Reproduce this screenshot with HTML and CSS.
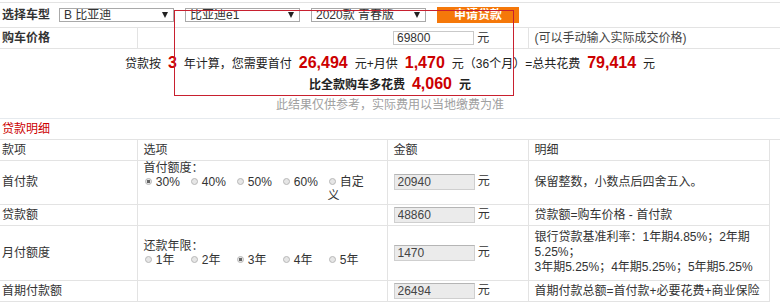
FILE: index.html
```html
<!DOCTYPE html>
<html lang="zh-CN">
<head>
    <meta charset="UTF-8">
    <title>贷款购车计算器</title>
    <meta name="viewport" content="width=device-width, initial-scale=1.0">
    <link rel="stylesheet" href="styles.css">
</head>
<body>

    <div class="calc">
        <table class="car-table">
            <colgroup>
                <col class="col-item">
                <col class="col-option">
                <col class="col-amount">
                <col class="col-wide">
            </colgroup>
            <tr class="row-select">
                <td colspan="4">
                    <div class="select-line">
                        <span class="row-label">选择车型</span>
                        <span class="select-box"><select><option>B 比亚迪</option></select></span>
                        <span class="select-box"><select><option>比亚迪e1</option></select></span>
                        <span class="select-box"><select><option>2020款 青春版</option></select></span>
                        <button class="apply-btn">申请贷款</button>
                    </div>
                </td>
            </tr>
            <tr class="row-price">
                <td class="row-label">购车价格</td>
                <td class="no-line"></td>
                <td><input class="price-input" type="text" value="69800"> 元</td>
                <td class="hint">(可以手动输入实际成交价格)</td>
            </tr>
            <tr class="row-result">
                <td colspan="4">
                    <p class="result-line">贷款按<span class="num">3</span>年计算，您需要首付<span class="num">26,494</span>元+月供<span class="num">1,470</span>元（36个月）=总共花费<span class="num">79,414</span>元</p>
                    <p class="result-line result-extra">比全款购车多花费<span class="num">4,060</span>元</p>
                    <p class="result-line result-note">此结果仅供参考，实际费用以当地缴费为准</p>
                </td>
            </tr>
        </table>

        <div class="section-title">贷款明细</div>

        <table class="loan-table">
            <colgroup>
                <col class="col-item">
                <col class="col-option">
                <col class="col-amount">
                <col class="col-detail">
            </colgroup>
            <tr class="row-head">
                <td>款项</td>
                <td>选项</td>
                <td>金额</td>
                <td>明细</td>
            </tr>
            <tr class="row-down">
                <td>首付款</td>
                <td class="options">
                    <div>首付额度：</div>
                    <div class="opt-list">
                        <label class="opt"><input type="radio" name="down" checked> 30%</label><label class="opt"><input type="radio" name="down"> 40%</label><label class="opt"><input type="radio" name="down"> 50%</label><label class="opt"><input type="radio" name="down"> 60%</label><label class="opt"><input type="radio" name="down"> 自定义</label>
                    </div>
                </td>
                <td><input class="amount-input" type="text" value="20940" readonly> 元</td>
                <td>保留整数，小数点后四舍五入。</td>
            </tr>
            <tr class="row-line">
                <td>贷款额</td>
                <td></td>
                <td><input class="amount-input" type="text" value="48860" readonly> 元</td>
                <td>贷款额=购车价格 - 首付款</td>
            </tr>
            <tr class="row-month">
                <td>月付额度</td>
                <td class="options">
                    <div>还款年限：</div>
                    <div class="opt-list">
                        <label class="opt"><input type="radio" name="years"> 1年</label><label class="opt"><input type="radio" name="years"> 2年</label><label class="opt"><input type="radio" name="years" checked> 3年</label><label class="opt"><input type="radio" name="years"> 4年</label><label class="opt"><input type="radio" name="years"> 5年</label>
                    </div>
                </td>
                <td><input class="amount-input" type="text" value="1470" readonly> 元</td>
                <td class="rates">银行贷款基准利率：1年期4.85%；2年期5.25%；<br>3年期5.25%；4年期5.25%；5年期5.25%</td>
            </tr>
            <tr class="row-line">
                <td>首期付款额</td>
                <td></td>
                <td><input class="amount-input" type="text" value="26494" readonly> 元</td>
                <td>首期付款总额=首付款+必要花费+商业保险</td>
            </tr>
        </table>

        <!-- red highlight drawn over the result -->
        <div class="highlight"></div>
    </div>

</body>
</html>
```

FILE: styles.css
```css
body {
    font-family: 'Liberation Sans', 'Noto Sans CJK SC', sans-serif;
    font-size: 12px;
    color: #333;
    background: #fff;
    margin: 0;
    padding: 0;
}

.calc {
    position: relative;
    width: 780px;
    padding-top: 2px;
}

table {
    border-collapse: collapse;
    table-layout: fixed;
}

td {
    border-bottom: 1px solid #e3e3e3;
    padding: 0 6px;
    line-height: 14px;
    vertical-align: middle;
}

.col-item { width: 137px; }
.col-option { width: 250px; }
.col-amount { width: 141px; }
.col-wide { width: 252px; }
.col-detail { width: 241px; }

/* top part */
.car-table {
    width: 780px;
    border-top: 1px solid #e3e3e3;
}

.row-select { height: 25px; }
.row-select td { padding: 0 2px; }

.select-line {
    display: flex;
    align-items: center;
    gap: 11px;
}

.row-label {
    font-weight: bold;
    color: #333;
    white-space: nowrap;
}

.select-line .row-label {
    width: 46px;
}

td.row-label {
    padding-left: 2px;
}

.select-box {
    position: relative;
    width: 115px;
    height: 14px;
}

.select-box select {
    appearance: none;
    display: block;
    width: 100%;
    height: 14px;
    margin: 0;
    padding: 0 14px 0 4px;
    border: 1px solid #a9a9a9;
    border-radius: 0;
    background: #fff;
    font-family: 'Liberation Sans', 'Noto Sans CJK SC', sans-serif;
    font-size: 12px;
    line-height: 12px;
    color: #333;
}

.select-box::after {
    content: "";
    position: absolute;
    right: 6px;
    top: 4px;
    border-top: 6px solid #222;
    border-left: 3px solid transparent;
    border-right: 3px solid transparent;
}

.apply-btn {
    width: 82px;
    height: 16px;
    padding: 0;
    border: none;
    background: #f5780a;
    color: #fff;
    font-family: 'Liberation Sans', 'Noto Sans CJK SC', sans-serif;
    font-size: 12px;
    font-weight: bold;
    line-height: 16px;
}

.row-price { height: 21px; }

.row-price td {
    border-right: 1px solid #e3e3e3;
}

.row-price td.no-line,
.row-price td.hint {
    border-right: none;
}

.price-input {
    width: 81px;
    height: 14px;
    box-sizing: border-box;
    border: 1px solid #c9c9c9;
    padding: 0 3px;
    margin: 0;
    font-family: 'Liberation Sans', sans-serif;
    font-size: 12px;
    color: #333;
    vertical-align: middle;
}

.hint {
    color: #444;
}

.row-result td {
    text-align: center;
    padding: 4px 0 3px;
    border-bottom-color: #e6eaee;
}

.result-line {
    margin: 0;
    line-height: 20px;
    color: #222;
}

.result-extra {
    font-weight: bold;
}

.result-note {
    color: #a0a0a0;
}

.num {
    padding: 0 7px;
    font-family: 'Liberation Sans', sans-serif;
    font-size: 16px;
    font-weight: bold;
    color: #cc0000;
}

.section-title {
    height: 20px;
    line-height: 20px;
    padding-left: 2px;
    color: #cc0000;
    border-bottom: 1px solid #e3e3e3;
}

/* loan detail table */
.loan-table {
    width: 769px;
}

.loan-table td {
    border-right: 1px solid #e3e3e3;
}

.loan-table td:first-child {
    padding-left: 2px;
}

.row-head { height: 20px; }
.row-down { height: 44px; }
.row-line { height: 21px; }
.row-month { height: 55px; }

.rates {
    line-height: 15px;
}

.opt {
    display: inline-block;
    vertical-align: top;
    width: 46px;
}

.opt input {
    appearance: none;
    width: 7px;
    height: 7px;
    margin: 0 1px 0 1px;
    border: 1px solid #b8b8b8;
    border-radius: 50%;
    background: #e6e6e6;
    vertical-align: 1px;
}

.opt input:checked {
    background: radial-gradient(circle, #666 0 1.5px, #e6e6e6 2px);
}

.amount-input {
    width: 81px;
    height: 16px;
    box-sizing: border-box;
    border: 1px solid #cfcfcf;
    border-top-color: #b5b5b5;
    background: #ebebeb;
    padding: 0 3px;
    margin: 0;
    font-family: 'Liberation Sans', sans-serif;
    font-size: 12px;
    color: #444;
    vertical-align: middle;
}

.highlight {
    position: absolute;
    left: 174px;
    top: 10px;
    width: 338px;
    height: 84px;
    border: 1px solid #c8202f;
    pointer-events: none;
}
```
